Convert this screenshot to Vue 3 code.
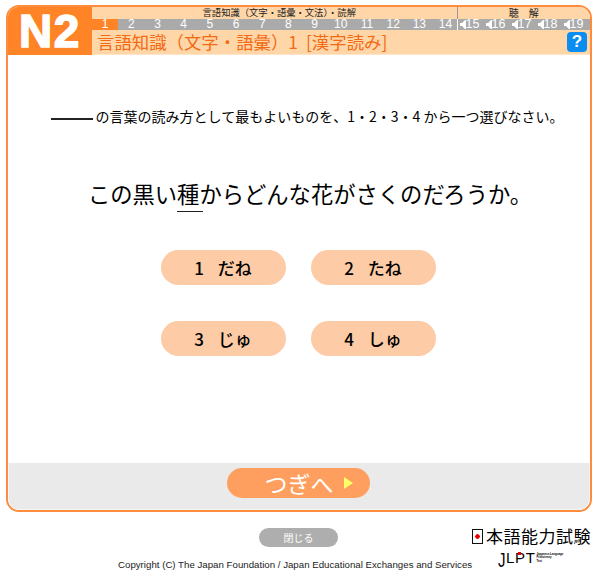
<script setup>
const reading = Array.from({ length: 14 }, (_, i) => i + 1)
const listening = [15, 16, 17, 18, 19]
const options = [
  { n: 1, t: 'だね' },
  { n: 2, t: 'たね' },
  { n: 3, t: 'じゅ' },
  { n: 4, t: 'しゅ' },
]
</script>

<template>
  <div class="page">
    <div class="frame">
      <header class="head">
        <div class="level">N2</div>
        <div class="head-right">
          <div class="sections">
            <div class="sec-a">言語知識（文字・語彙・文法）・読解</div>
            <div class="sec-b">聴　解</div>
          </div>
          <div class="nums">
            <div class="nums-a">
              <span v-for="n in reading" :key="n" class="num" :class="{ on: n === 1 }">{{ n }}</span>
            </div>
            <div class="nums-b">
              <span v-for="n in listening" :key="n" class="num snd">
                <svg width="6" height="9" viewBox="0 0 6 9"><path d="M0 3h2l3-3h1v9H5L2 6H0z" fill="#fff" /></svg>{{ n }}
              </span>
            </div>
          </div>
          <div class="title-row">
            <div class="title">言語知識（文字・語彙）<span class="t-num">1</span><span class="t-br">[漢字読み]</span></div>
            <div class="help">?</div>
          </div>
        </div>
      </header>

      <main class="body">
        <p class="instr"><span class="blank"></span><span>の言葉の読み方として最もよいものを、1・2・3・4 から一つ選びなさい。</span></p>
        <p class="sentence">この黒い<span class="ul">種</span>からどんな花がさくのだろうか。</p>
        <div class="opts">
          <div v-for="o in options" :key="o.n" class="opt"><span>{{ o.n }}</span><span>{{ o.t }}</span></div>
        </div>
      </main>

      <footer class="foot">
        <div class="next"><span>つぎへ</span><i class="arrow"></i></div>
      </footer>
    </div>

    <div class="bottom">
      <div class="close">閉じる</div>
      <div class="copy">Copyright (C) The Japan Foundation / Japan Educational Exchanges and Services</div>
      <div class="logo">
        <div class="logo-jp"><i class="seal"></i>本語能力試験</div>
        <div class="logo-en">
          <span class="jlpt"><span class="j">J</span>L<span class="p">P<i class="p-dot"></i></span>T</span>
          <span class="tiny">Japanese-Language<br />Proficiency<br />Test</span>
        </div>
      </div>
    </div>
  </div>
</template>

<style>
html, body { margin: 0; background: #fff; }
</style>

<style scoped>
.page {
  width: 600px;
  height: 581px;
  position: relative;
  overflow: hidden;
  padding: 5px 0 0 6px;
  box-sizing: border-box;
  font-family: "Noto Sans CJK JP", "Liberation Sans", sans-serif;
  color: #000;
}
.frame {
  width: 586px;
  height: 507px;
  box-sizing: border-box;
  border: 2.5px solid #ff8c3c;
  border-radius: 13px;
  overflow: hidden;
  display: flex;
  flex-direction: column;
  background: #fff;
}
.head { display: flex; height: 48px; flex: none; background: #ffd6a8; }
.level {
  width: 84px;
  background: #ff8427;
  color: #fff;
  font: bold 46px/48px "Liberation Sans", sans-serif;
  text-align: center;
  letter-spacing: 1.5px;
  -webkit-text-stroke: 1.5px #fff;
}
.head-right { flex: 1; display: flex; flex-direction: column; min-width: 0; }
.sections { display: flex; height: 11.5px; flex: none; font-size: 9.3px; line-height: 11.5px; color: #222; }
.sec-a { width: 365.5px; padding-left: 10px; text-align: center; border-right: 1px solid #999; box-sizing: border-box; }
.sec-b { flex: 1; text-align: center; font-size: 10px; }
.nums { display: flex; height: 11px; flex: none; background: #aaa; color: #fff; font: 12px/11px "Liberation Sans", sans-serif; }
.nums-a { display: flex; width: 364.5px; border-right: 1px solid #fff; box-sizing: content-box; }
.nums-a .num { width: 26.2px; flex: none; text-align: center; }
.nums-b { display: flex; flex: 1; padding-left: 2px; }
.nums-b .num { width: 26px; flex: none; display: flex; align-items: center; font-size: 12.5px; }
.num.on { background: #ff8427; }
.title-row { flex: 1; display: flex; align-items: center; justify-content: space-between; padding: 0 3px 0 5px; border-bottom: 1px solid #ffe6c8; }
.title { font-size: 17.4px; color: #f26a12; line-height: 24px; white-space: nowrap; display: flex; }
.t-br { margin-left: 8px; }
.help {
  width: 20px;
  height: 20px;
  background: #0a8cf0;
  border-radius: 4px;
  color: #fff;
  font: bold 17px/20px "Liberation Sans", sans-serif;
  text-align: center;
}
.body { flex: 1; display: flex; flex-direction: column; align-items: center; min-height: 0; }
.instr { margin: 51px 0 0; padding-left: 16px; display: flex; align-items: center; gap: 3px; font-size: 14px; line-height: 20px; white-space: nowrap; }
.blank { width: 42px; height: 2px; background: #222; margin-top: 5px; }
.sentence { margin: 51px 0 0; padding-left: 22px; font-size: 22.3px; line-height: 32px; white-space: nowrap; }
.ul { display: inline-block; position: relative; }
.ul::after { content: ""; position: absolute; left: 0; right: -4px; bottom: -3px; height: 1.5px; background: #222; }
.opts { display: grid; grid-template-columns: 125px 125px; column-gap: 25px; row-gap: 36px; margin: 41px 2px 0 0; }
.opt {
  height: 35px;
  border-radius: 18px;
  background: #fdcba6;
  display: flex;
  align-items: center;
  justify-content: center;
  gap: 14px;
  font-size: 17px;
  font-weight: 500;
}
.foot { height: 47.5px; flex: none; background: #eaeaea; display: flex; align-items: flex-start; justify-content: center; padding: 5px 2px 0 0; box-sizing: border-box; border-radius: 0 0 10px 10px; border: 1px solid #f6f6f6; border-top: none; }
.next {
  width: 143px;
  height: 30px;
  border-radius: 15px;
  background: #ff9f5f;
  color: #fff;
  font-size: 23px;
  line-height: 30px;
  display: flex;
  align-items: center;
  justify-content: flex-end;
  padding-right: 17px;
  box-sizing: border-box;
  gap: 10px;
}
.arrow { width: 0; height: 0; border-left: 9px solid #ffff66; border-top: 6.5px solid transparent; border-bottom: 6.5px solid transparent; }
.bottom { position: relative; height: 69px; }
.close {
  position: absolute;
  left: 253px;
  top: 16px;
  width: 79px;
  height: 19px;
  border-radius: 10px;
  background: #aeaeae;
  color: #fff;
  font-size: 10px;
  line-height: 19px;
  text-align: center;
}
.copy { position: absolute; left: 112px; top: 47px; font: 9.7px/12px "Liberation Sans", sans-serif; color: #222; white-space: nowrap; }
.logo { position: absolute; left: 466px; top: 13px; }
.logo-jp { display: flex; align-items: center; font-size: 17px; line-height: 22px; letter-spacing: 0.5px; }
.seal { width: 11px; height: 15px; margin-right: 3px; box-sizing: border-box; border: 1.5px solid #111; background: radial-gradient(circle, #e00 0 2px, #fff 2.5px); }
.logo-en { display: flex; align-items: center; gap: 1px; margin-left: 26px; margin-top: 4px; height: 14px; }
.jlpt { font: 15px/14px "Liberation Sans", sans-serif; letter-spacing: 0.6px; white-space: nowrap; }
.j { display: inline-block; transform: scaleY(1.4); transform-origin: 50% 18%; }
.p { position: relative; }
.p-dot { position: absolute; left: 3px; top: 3px; width: 3px; height: 3px; background: #e00; }
.tiny { font: bold 2.8px/3.2px "Liberation Sans", sans-serif; white-space: nowrap; }
</style>
